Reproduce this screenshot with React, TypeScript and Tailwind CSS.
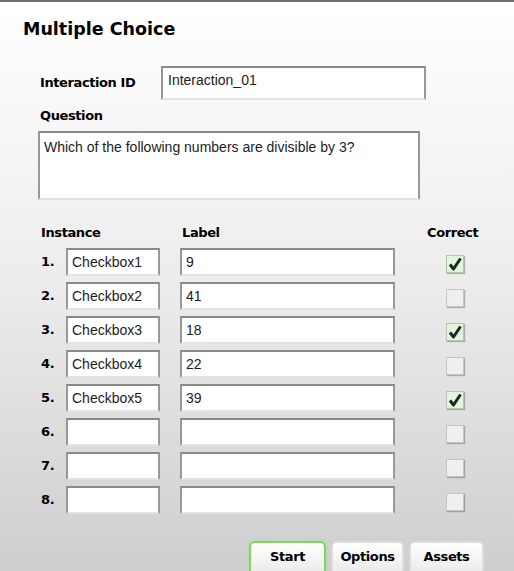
import { useState } from "react";

interface Choice {
  instance: string;
  label: string;
  correct: boolean;
}

const initial: Choice[] = [
  { instance: "Checkbox1", label: "9", correct: true },
  { instance: "Checkbox2", label: "41", correct: false },
  { instance: "Checkbox3", label: "18", correct: true },
  { instance: "Checkbox4", label: "22", correct: false },
  { instance: "Checkbox5", label: "39", correct: true },
  { instance: "", label: "", correct: false },
  { instance: "", label: "", correct: false },
  { instance: "", label: "", correct: false },
];

const bold = "font-['DejaVu_Sans',Verdana,sans-serif] font-bold text-black tracking-[-0.4px]";
const field =
  "bg-white border-2 border-t-[#868b88] border-l-[#959a97] border-r-[#959a97] border-b-[#e2e4e3] font-['Liberation_Sans',Arial,sans-serif] text-[14px] text-[#1c1c1c] outline-none";

function Check({ on, onClick }: { on: boolean; onClick: () => void }) {
  return (
    <button
      onClick={onClick}
      className={`w-[18px] h-[18px] flex items-center justify-center border ${
        on ? "bg-[#e4f4dc] border-[#b1c7a9]" : "bg-[#efefef] border-[#c4c4c4]"
      } shadow-[1px_1px_1px_rgba(0,0,0,0.25)]`}
    >
      {on && (
        <svg width="14" height="14" viewBox="0 0 14 14">
          <path d="M2 7.5 L5.5 12 L12.5 1.5" fill="none" stroke="#1d272b" strokeWidth="3" strokeLinejoin="round" />
        </svg>
      )}
    </button>
  );
}

export default function App() {
  const [rows, setRows] = useState(initial);
  const [tab, setTab] = useState("Start");

  const toggle = (i: number) =>
    setRows(r => r.map((c, j) => (j === i ? { ...c, correct: !c.correct } : c)));

  return (
    <div className="w-[514px] h-[571px] overflow-hidden flex flex-col border-t-2 border-[#6f6f6f] bg-gradient-to-b from-white via-[#ececec] to-[#cecece]">
      <h1 className={`${bold} text-[17.5px] tracking-[0px] mt-[16px] ml-[23px] leading-[22px]`}>Multiple Choice</h1>

      <div className="flex items-center mt-[26px] ml-[40px]">
        <span className={`${bold} text-[13px] w-[121px]`}>Interaction ID</span>
        <input className={`${field} w-[265px] h-[34px] px-[5px] pb-[6px]`} defaultValue="Interaction_01" />
      </div>

      <div className={`${bold} text-[13px] ml-[40px] mt-[6px]`}>Question</div>
      <textarea
        className={`${field} w-[382px] h-[69px] ml-[38px] mt-[5px] px-[4px] py-[4px] resize-none`}
        defaultValue="Which of the following numbers are divisible by 3?"
      />

      <div className="flex items-center mt-[24px] ml-[41px] h-[18px]">
        <span className={`${bold} text-[13px] w-[141px]`}>Instance</span>
        <span className={`${bold} text-[13px] w-[245px]`}>Label</span>
        <span className={`${bold} text-[13px]`}>Correct</span>
      </div>

      <div className="flex flex-col gap-[6px] mt-[6px]">
        {rows.map((c, i) => (
          <div key={i} className="flex items-center h-[28px]">
            <span className={`${bold} text-[13px] w-[25px] ml-[41px]`}>{i + 1}.</span>
            <input className={`${field} w-[94px] h-[28px] px-[4px]`} defaultValue={c.instance} />
            <input className={`${field} w-[215px] h-[28px] ml-[20px] px-[4px]`} defaultValue={c.label} />
            <div className="ml-[51px] mt-[4px]">
              <Check on={c.correct} onClick={() => toggle(i)} />
            </div>
          </div>
        ))}
      </div>

      <div className="flex items-end gap-[5px] ml-[249px] mt-auto">
        {["Start", "Options", "Assets"].map(t => (
          <button
            key={t}
            onClick={() => setTab(t)}
            className={`${bold} text-[13px] h-[30px] rounded-t-[6px] border-2 border-b-0 bg-gradient-to-b from-white to-[#ececec] ${
              tab === t ? "w-[77px] border-[#7ed46a] shadow-[0_0_3px_#9be88a]" : t === "Options" ? "w-[73px] border-[#dcdcdc]" : "w-[75px] border-[#dcdcdc]"
            }`}
          >
            {t}
          </button>
        ))}
      </div>
    </div>
  );
}
